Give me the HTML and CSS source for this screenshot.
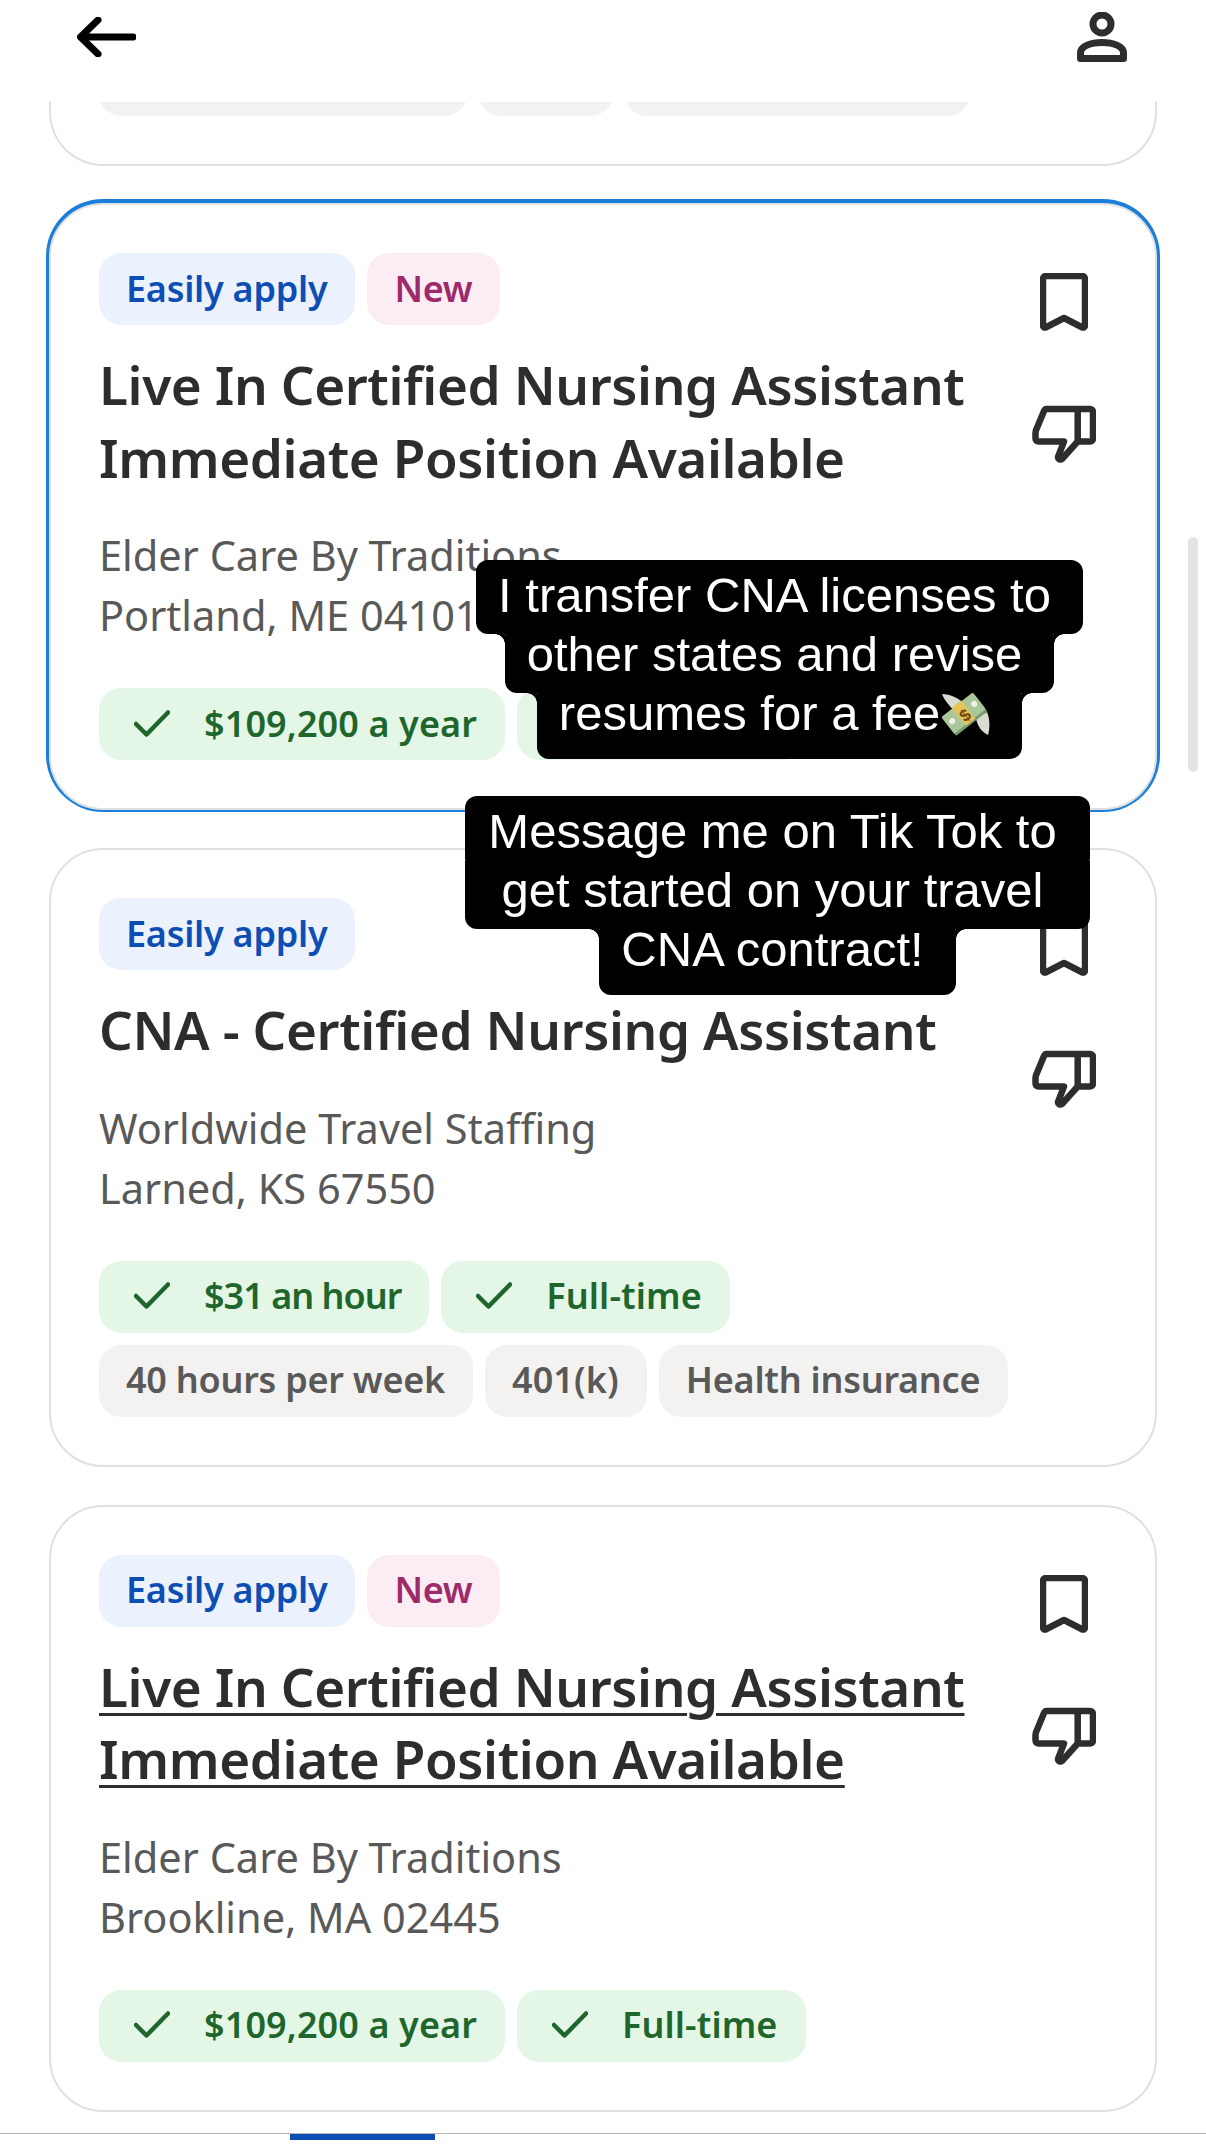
FILE: index.html
```html
<!DOCTYPE html>
<html lang="en">
<head>
    <meta charset="UTF-8">
    <title>Job results</title>
    <link rel="stylesheet" href="styles.css">
</head>
<body>
    <div class="page">
        <header class="topBar">
            <svg class="backIcon" viewBox="0 0 59 40"><path d="M56 20H4M21 3L3.500 20L21 37"/></svg>
            <svg class="userIcon" viewBox="0 0 50 50"><circle cx="25" cy="12" r="9"/><path d="M3.500 46.500V41C3.500 34 14 30.500 25 30.500S46.500 34 46.500 41V46.500Z"/></svg>
        </header>

        <main class="jobList">
            <div class="card cardTail">
                <div class="chipRow">
                    <span class="chip chipGrey tailA"></span>
                    <span class="chip chipGrey tailB"></span>
                    <span class="chip chipGrey tailC"></span>
                </div>
            </div>

            <article class="card cardActive">
                <div class="cardBody">
                    <div class="chipRow">
                        <span class="chip chipBlue">Easily apply</span>
                        <span class="chip chipPink">New</span>
                    </div>
                    <h2 class="jobTitle">Live In Certified Nursing Assistant Immediate Position Available</h2>
                    <p class="company">Elder Care By Traditions<br>Portland, ME 04101</p>
                    <div class="chipRow">
                        <span class="chip chipGreen chipLoose"><svg class="checkIcon" viewBox="0 0 36 27"><path d="M2 14L12.500 24.500L34 2.500"/></svg>$109,200 a year</span>
                        <span class="chip chipGreen chipLoose"><svg class="checkIcon" viewBox="0 0 36 27"><path d="M2 14L12.500 24.500L34 2.500"/></svg>Full-time</span>
                    </div>
                </div>
                <div class="cardActions">
                    <svg class="saveIcon" viewBox="0 0 48 58"><path d="M6 3H42A3 3 0 0 1 45 6V52.500A2 2 0 0 1 42.500 54.500L24 45L5.500 54.500A2 2 0 0 1 3 52.500V6A3 3 0 0 1 6 3Z"/></svg>
                    <svg class="dislikeIcon" viewBox="0 0 64 59"><path d="M14 4H58A3 3 0 0 1 61 7V33.500A3 3 0 0 1 58 36.500H45.700L30 54A2.500 2.500 0 0 1 26 52L32 36.500H6.500A3 3 0 0 1 3.500 33.500V28Q3.500 26 4.500 24L12 6Q13 4 14 4ZM45.700 4V36.500"/></svg>
                </div>
            </article>

            <article class="card">
                <div class="cardBody">
                    <div class="chipRow">
                        <span class="chip chipBlue">Easily apply</span>
                    </div>
                    <h2 class="jobTitle">CNA - Certified Nursing Assistant</h2>
                    <p class="company">Worldwide Travel Staffing<br>Larned, KS 67550</p>
                    <div class="chipRow">
                        <span class="chip chipGreen chipTight"><svg class="checkIcon" viewBox="0 0 36 27"><path d="M2 14L12.500 24.500L34 2.500"/></svg>$31 an hour</span>
                        <span class="chip chipGreen chipLoose"><svg class="checkIcon" viewBox="0 0 36 27"><path d="M2 14L12.500 24.500L34 2.500"/></svg>Full-time</span>
                        <span class="chip chipGrey">40 hours per week</span>
                        <span class="chip chipGrey chipLoose">401(k)</span>
                        <span class="chip chipGrey">Health insurance</span>
                    </div>
                </div>
                <div class="cardActions">
                    <svg class="saveIcon" viewBox="0 0 48 58"><path d="M6 3H42A3 3 0 0 1 45 6V52.500A2 2 0 0 1 42.500 54.500L24 45L5.500 54.500A2 2 0 0 1 3 52.500V6A3 3 0 0 1 6 3Z"/></svg>
                    <svg class="dislikeIcon" viewBox="0 0 64 59"><path d="M14 4H58A3 3 0 0 1 61 7V33.500A3 3 0 0 1 58 36.500H45.700L30 54A2.500 2.500 0 0 1 26 52L32 36.500H6.500A3 3 0 0 1 3.500 33.500V28Q3.500 26 4.500 24L12 6Q13 4 14 4ZM45.700 4V36.500"/></svg>
                </div>
            </article>

            <article class="card">
                <div class="cardBody">
                    <div class="chipRow">
                        <span class="chip chipBlue">Easily apply</span>
                        <span class="chip chipPink">New</span>
                    </div>
                    <h2 class="jobTitle jobTitleHover">Live In Certified Nursing Assistant Immediate Position Available</h2>
                    <p class="company">Elder Care By Traditions<br>Brookline, MA 02445</p>
                    <div class="chipRow">
                        <span class="chip chipGreen chipLoose"><svg class="checkIcon" viewBox="0 0 36 27"><path d="M2 14L12.500 24.500L34 2.500"/></svg>$109,200 a year</span>
                        <span class="chip chipGreen chipLoose"><svg class="checkIcon" viewBox="0 0 36 27"><path d="M2 14L12.500 24.500L34 2.500"/></svg>Full-time</span>
                    </div>
                </div>
                <div class="cardActions">
                    <svg class="saveIcon" viewBox="0 0 48 58"><path d="M6 3H42A3 3 0 0 1 45 6V52.500A2 2 0 0 1 42.500 54.500L24 45L5.500 54.500A2 2 0 0 1 3 52.500V6A3 3 0 0 1 6 3Z"/></svg>
                    <svg class="dislikeIcon" viewBox="0 0 64 59"><path d="M14 4H58A3 3 0 0 1 61 7V33.500A3 3 0 0 1 58 36.500H45.700L30 54A2.500 2.500 0 0 1 26 52L32 36.500H6.500A3 3 0 0 1 3.500 33.500V28Q3.500 26 4.500 24L12 6Q13 4 14 4ZM45.700 4V36.500"/></svg>
                </div>
            </article>
        </main>

        <div class="tabBar"><span class="tabMark"></span></div>

        <!-- scrollbar and video captions sit over the list -->
        <div class="scrollThumb"></div>

        <div class="caption captionOne">
            <span class="captionLine">I transfer CNA licenses to</span>
            <span class="captionLine captionStep">other states and revise</span>
            <span class="captionLine captionStep">resumes for a fee<svg class="moneyIcon" viewBox="0 0 50 44">
                <path class="wing" d="M2 2C10 2 20 6 24 13L15 20C10 14 4 8 2 2Z"/>
                <path class="wing" d="M36 26L47 20C50 27 50 36 48 43C42 40 37 34 36 26Z"/>
                <g transform="rotate(-38 25 23)">
                    <rect class="billBack" x="5" y="13" width="40" height="21" rx="1.500"/>
                    <rect class="bill" x="5" y="10" width="40" height="21" rx="1.500"/>
                    <rect class="band" x="19" y="9" width="12" height="23"/>
                    <circle class="billDot" cx="11" cy="20" r="3"/>
                    <circle class="billDot" cx="39" cy="20" r="3"/>
                </g>
                <text class="dollar" x="25" y="29" text-anchor="middle" transform="rotate(-38 25 23)">$</text>
            </svg></span>
        </div>

        <div class="caption captionTwo">
            <span class="captionLine captionFull">Message me on Tik Tok to</span>
            <span class="captionLine captionFull">get started on your travel</span>
            <span class="captionLine captionStep">CNA contract!</span>
        </div>
    </div>
</body>
</html>
```

FILE: styles.css
```css
* {
    box-sizing: border-box;
    padding: 0;
    margin: 0;
}

html {
    background-color: #fff;
}

body {
    font-family: "Noto Sans", sans-serif;
    color: #2d2d2d;
}

.page {
    position: relative;
    width: 1206px;
    height: 2144px;
    overflow: hidden;
    background-color: #fff;
}

.topBar {
    display: flex;
    justify-content: space-between;
    align-items: flex-start;
    height: 102px;
    padding: 12px 79px 0 77px;
}

.backIcon {
    width: 59px;
    height: 40px;
    margin-top: 5px;
    fill: none;
    stroke: #000;
    stroke-width: 7;
    stroke-linecap: round;
    stroke-linejoin: round;
}

.userIcon {
    width: 50px;
    height: 50px;
    fill: none;
    stroke: #2d2d2d;
    stroke-width: 7;
    stroke-linejoin: round;
}

.jobList {
    display: flex;
    flex-direction: column;
    gap: 38px;
    padding: 0 49px;
}

.card {
    display: flex;
    justify-content: space-between;
    border: 2px solid #e0e0e0;
    border-radius: 54px;
    padding: 48px 59px 48px 48px;
    background-color: #fff;
}

.cardTail {
    height: 64px;
    margin-bottom: -1px;
    overflow: hidden;
    align-items: flex-end;
    border-top: none;
    border-radius: 0 0 54px 54px;
    padding-top: 0;
    padding-bottom: 48px;
}

.cardActive {
    box-shadow: 0 -1px 0 3px #1a7fdb;
}

.cardBody {
    flex: 1;
    min-width: 0;
}

.cardActions {
    display: flex;
    flex-direction: column;
    align-items: center;
    flex-shrink: 0;
    gap: 74px;
    width: 64px;
    margin: 20px 0 0 12px;
}

.saveIcon {
    width: 48px;
    height: 58px;
}

.dislikeIcon {
    width: 64px;
    height: 59px;
}

.saveIcon, .dislikeIcon {
    fill: none;
    stroke: #2d2d2d;
    stroke-width: 6.500;
    stroke-linejoin: round;
}

.chipRow {
    display: flex;
    flex-wrap: wrap;
    gap: 12px;
}

.chip {
    display: flex;
    align-items: center;
    height: 72px;
    padding: 0 28px 2px 27px;
    border-radius: 22px;
    font-size: 36px;
    font-weight: 600;
    letter-spacing: -0.250px;
    white-space: nowrap;
}

.chipBlue {
    background-color: #ebf2fe;
    color: #0d4eb5;
}

.chipPink {
    background-color: #fcecf3;
    color: #9d2b6b;
}

.chipGreen {
    gap: 34px;
    padding-left: 35px;
    background-color: #e4f7e6;
    color: #1f662c;
}

.chipGrey {
    background-color: #f3f2f1;
    color: #595959;
}

.chipLoose {
    letter-spacing: 0.100px;
}

.chipTight {
    letter-spacing: -1px;
}

.tailA {
    width: 368px;
}

.tailB {
    width: 134px;
}

.tailC {
    width: 345px;
}

.checkIcon {
    width: 36px;
    height: 27px;
    fill: none;
    stroke: #1f662c;
    stroke-width: 4.500;
    stroke-linecap: round;
    stroke-linejoin: round;
}

.jobTitle {
    margin-top: 24px;
    font-size: 53px;
    font-weight: 600;
    line-height: 72.500px;
    letter-spacing: -0.400px;
}

.jobTitleHover {
    text-decoration: underline;
    text-decoration-thickness: 3px;
    text-underline-offset: 6px;
}

.company {
    margin: 31px 0 43px;
    font-size: 41.500px;
    line-height: 60px;
    color: #595959;
}

.tabBar {
    position: absolute;
    left: 0;
    right: 0;
    top: 2133px;
    height: 11px;
    border-top: 1px solid #b8b8b8;
}

.tabMark {
    display: block;
    width: 145px;
    height: 6px;
    margin-left: 290px;
    background-color: #0d4eb5;
}

.scrollThumb {
    position: absolute;
    left: 1188px;
    top: 537px;
    width: 10px;
    height: 235px;
    border-radius: 5px;
    background-color: #e4e4e4;
}

.caption {
    position: absolute;
    display: flex;
    flex-direction: column;
    align-items: center;
    font-family: "Liberation Sans", sans-serif;
    font-size: 49px;
    line-height: 59px;
    color: #fff;
    text-align: center;
}

.captionOne {
    left: 474px;
    width: 611px;
    top: 560px;
}

.captionTwo {
    left: 465px;
    width: 625px;
    top: 796px;
}

.captionLine {
    position: relative;
    padding: 0 32px 9px 22px;
    margin-bottom: -9px;
    border-radius: 12px;
    background-color: #000;
    white-space: nowrap;
}

.captionLine:first-child {
    padding-top: 6px;
}

.captionLine:last-child {
    padding-bottom: 16px;
    margin-bottom: 0;
}

.captionFull {
    align-self: stretch;
}

.captionFull + .captionFull {
    border-top-left-radius: 0;
    border-top-right-radius: 0;
}

/* small inside fillets where a line steps in from the one above */
.captionStep::before, .captionStep::after {
    content: "";
    position: absolute;
    top: 9px;
    width: 10px;
    height: 10px;
}

.captionStep::before {
    left: -10px;
    background: radial-gradient(circle at 0 100%, transparent 9.500px, #000 10px);
}

.captionStep::after {
    right: -10px;
    background: radial-gradient(circle at 100% 100%, transparent 9.500px, #000 10px);
}

.moneyIcon {
    width: 50px;
    height: 44px;
    vertical-align: -6px;
}

.wing {
    fill: #d9dcd0;
}

.bill {
    fill: #a9c79a;
}

.billBack {
    fill: #7d9a70;
}

.band {
    fill: #e8c35a;
}

.billDot {
    fill: #eef4e4;
}

.dollar {
    font-size: 17px;
    font-weight: bold;
    fill: #6b4a10;
}
```
